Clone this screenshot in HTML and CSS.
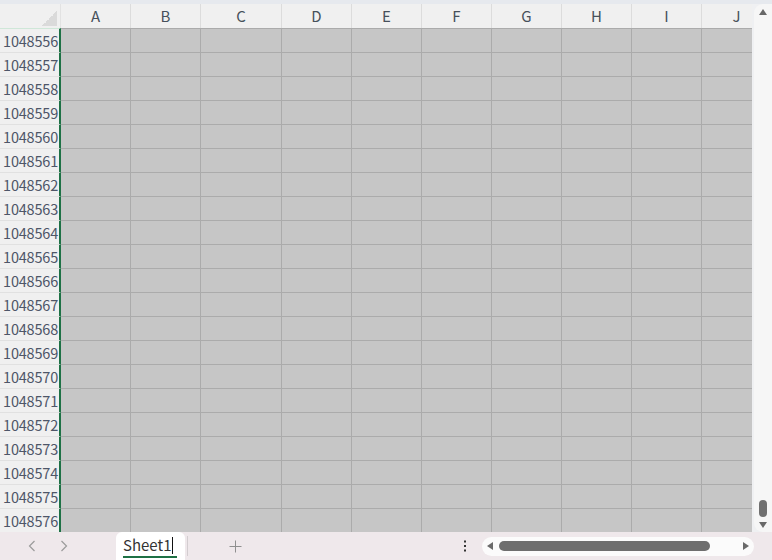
FILE: index.html
```html
<!DOCTYPE html>
<html lang="ja">
<head>
<meta charset="utf-8">
<title>Sheet1</title>
<link rel="stylesheet" href="styles.css">
</head>
<body>
<div class="app">
  <div class="topstrip"></div>
  <div class="main">
    <div class="sheet">
      <table class="grid">
        <colgroup>
          <col class="c-rh"><col class="c-std"><col class="c-std"><col class="c-wide"><col class="c-std"><col class="c-std"><col class="c-std"><col class="c-std"><col class="c-std"><col class="c-std"><col class="c-std">
        </colgroup>
        <thead>
          <tr><th class="corner"></th><th>A</th><th>B</th><th>C</th><th>D</th><th>E</th><th>F</th><th>G</th><th>H</th><th>I</th><th>J</th></tr>
        </thead>
        <tbody>
          <tr class="first"><th>1048556</th><td></td><td></td><td></td><td></td><td></td><td></td><td></td><td></td><td></td><td></td></tr>
          <tr><th>1048557</th><td></td><td></td><td></td><td></td><td></td><td></td><td></td><td></td><td></td><td></td></tr>
          <tr><th>1048558</th><td></td><td></td><td></td><td></td><td></td><td></td><td></td><td></td><td></td><td></td></tr>
          <tr><th>1048559</th><td></td><td></td><td></td><td></td><td></td><td></td><td></td><td></td><td></td><td></td></tr>
          <tr><th>1048560</th><td></td><td></td><td></td><td></td><td></td><td></td><td></td><td></td><td></td><td></td></tr>
          <tr><th>1048561</th><td></td><td></td><td></td><td></td><td></td><td></td><td></td><td></td><td></td><td></td></tr>
          <tr><th>1048562</th><td></td><td></td><td></td><td></td><td></td><td></td><td></td><td></td><td></td><td></td></tr>
          <tr><th>1048563</th><td></td><td></td><td></td><td></td><td></td><td></td><td></td><td></td><td></td><td></td></tr>
          <tr><th>1048564</th><td></td><td></td><td></td><td></td><td></td><td></td><td></td><td></td><td></td><td></td></tr>
          <tr><th>1048565</th><td></td><td></td><td></td><td></td><td></td><td></td><td></td><td></td><td></td><td></td></tr>
          <tr><th>1048566</th><td></td><td></td><td></td><td></td><td></td><td></td><td></td><td></td><td></td><td></td></tr>
          <tr><th>1048567</th><td></td><td></td><td></td><td></td><td></td><td></td><td></td><td></td><td></td><td></td></tr>
          <tr><th>1048568</th><td></td><td></td><td></td><td></td><td></td><td></td><td></td><td></td><td></td><td></td></tr>
          <tr><th>1048569</th><td></td><td></td><td></td><td></td><td></td><td></td><td></td><td></td><td></td><td></td></tr>
          <tr><th>1048570</th><td></td><td></td><td></td><td></td><td></td><td></td><td></td><td></td><td></td><td></td></tr>
          <tr><th>1048571</th><td></td><td></td><td></td><td></td><td></td><td></td><td></td><td></td><td></td><td></td></tr>
          <tr><th>1048572</th><td></td><td></td><td></td><td></td><td></td><td></td><td></td><td></td><td></td><td></td></tr>
          <tr><th>1048573</th><td></td><td></td><td></td><td></td><td></td><td></td><td></td><td></td><td></td><td></td></tr>
          <tr><th>1048574</th><td></td><td></td><td></td><td></td><td></td><td></td><td></td><td></td><td></td><td></td></tr>
          <tr><th>1048575</th><td></td><td></td><td></td><td></td><td></td><td></td><td></td><td></td><td></td><td></td></tr>
          <tr><th>1048576</th><td></td><td></td><td></td><td></td><td></td><td></td><td></td><td></td><td></td><td></td></tr>
        </tbody>
      </table>
    </div>
    <div class="vscroll">
      <span class="tri tri-up"></span>
      <span class="vthumb"></span>
      <span class="tri tri-down"></span>
    </div>
  </div>
  <div class="bottombar">
    <button class="nav prev" aria-label="前のシート">
      <svg width="8" height="12" viewBox="0 0 8 12"><path d="M6.5 1 L1.5 6 L6.5 11" fill="none" stroke="#9b9b9b" stroke-width="1.2"/></svg>
    </button>
    <button class="nav next" aria-label="次のシート">
      <svg width="8" height="12" viewBox="0 0 8 12"><path d="M1.5 1 L6.5 6 L1.5 11" fill="none" stroke="#9b9b9b" stroke-width="1.2"/></svg>
    </button>
    <div class="tab"><span class="tab-label">Sheet1<span class="caret"></span></span></div>
    <span class="sep"></span>
    <button class="plus" aria-label="シートの追加">
      <svg width="13" height="13" viewBox="0 0 13 13"><path d="M6.5 0.5 V12.5 M0.5 6.5 H12.5" fill="none" stroke="#8f8f8f" stroke-width="1"/></svg>
    </button>
    <button class="kebab" aria-label="その他">
      <svg width="4" height="12" viewBox="0 0 4 12"><rect x="1" y="0.5" width="2" height="2" fill="#333"/><rect x="1" y="5" width="2" height="2" fill="#333"/><rect x="1" y="9.5" width="2" height="2" fill="#333"/></svg>
    </button>
    <div class="hscroll">
      <span class="tri tri-left"></span>
      <span class="hthumb"></span>
      <span class="tri tri-right"></span>
    </div>
  </div>
</div>
</body>
</html>
```
FILE: styles.css
```css
* { box-sizing: border-box; }
html, body { margin: 0; padding: 0; }
body {
  width: 772px;
  height: 560px;
  overflow: hidden;
  font-family: "Noto Sans CJK JP", "Noto Sans", sans-serif;
  background: #eef0f2;
}
.app { display: flex; flex-direction: column; height: 560px; }
.topstrip { flex: none; height: 4px; background: #e6e9ee; }
.main { flex: none; display: flex; height: 528px; background: #eff0f2; }
.sheet { flex: none; width: 752px; overflow: hidden; }

.grid {
  border-collapse: separate;
  border-spacing: 0;
  table-layout: fixed;
  width: 772px;
}
.c-rh { width: 61px; }
.c-std { width: 70px; }
.c-wide { width: 81px; }
.grid tr { height: 24px; }

.grid thead th {
  height: 24px;
  padding: 0;
  background: #f0f0f0;
  border-right: 1px solid #dcdcdc;
  font-weight: normal;
  font-size: 15px;
  line-height: 22px;
  color: #47505b;
  text-align: center;
}
.grid thead th.corner {
  border-right: 1px solid #e2e2e2;
  background:
    linear-gradient(to bottom right, transparent 50%, #dadada 50%) no-repeat right 3px bottom 2px / 15px 15px,
    #f0f0f0;
}

.grid tbody th {
  height: 24px;
  padding: 0 1px 0 0;
  background: #f0f0f0;
  border-top: 1px solid #e1e1e1;
  border-right: 2px solid #1e7145;
  font-weight: normal;
  font-size: 14.5px;
  line-height: 22px;
  color: #4e5668;
  text-align: right;
  letter-spacing: -0.2px;
}
.grid tbody tr.first th { border-top-color: #cfe7d8; }
.grid td {
  height: 24px;
  padding: 0;
  background: #c6c6c6;
  border-top: 1px solid #ababab;
  border-right: 1px solid #ababab;
}

.vscroll {
  flex: none;
  width: 18px;
  margin-left: 2px;
  background: #f6f6f6;
  border-radius: 9px 0 0 9px;
  display: flex;
  flex-direction: column;
  align-items: center;
  padding: 5px 0 4px 0;
}
.tri { display: block; width: 0; height: 0; flex: none; }
.tri-up { border-left: 4.5px solid transparent; border-right: 4.5px solid transparent; border-bottom: 6px solid #686868; }
.tri-down { border-left: 4.5px solid transparent; border-right: 4.5px solid transparent; border-top: 6px solid #686868; }
.tri-left { border-top: 4.5px solid transparent; border-bottom: 4.5px solid transparent; border-right: 6px solid #6a6a6a; }
.tri-right { border-top: 4.5px solid transparent; border-bottom: 4.5px solid transparent; border-left: 6px solid #6a6a6a; }
.vthumb {
  margin-top: auto;
  margin-bottom: 5px;
  width: 8px;
  height: 17px;
  border-radius: 4px;
  background: #707070;
}

.bottombar {
  flex: none;
  height: 28px;
  background: #efe8eb;
  display: flex;
  align-items: center;
}
.bottombar button {
  border: none;
  background: transparent;
  padding: 0;
  margin: 0;
  display: flex;
  align-items: center;
  justify-content: center;
  height: 28px;
}
.nav { width: 24px; }
.nav.prev { margin-left: 20px; }
.nav.next { margin-left: 8px; }
.tab {
  align-self: stretch;
  margin-left: 40px;
  width: 69px;
  background: #ffffff;
  border-radius: 6px 6px 0 0;
  display: flex;
  align-items: center;
  padding: 1px 0 0 7px;
}
.tab-label {
  display: inline-flex;
  align-items: center;
  font-size: 15px;
  line-height: 20px;
  color: #333333;
  border-bottom: 2px solid #1e7145;
  padding: 0 4px 1px 0;
}
.caret {
  display: inline-block;
  width: 1px;
  height: 17px;
  background: #111;
  margin-left: 1px;
}
.sep {
  flex: none;
  width: 1px;
  height: 20px;
  margin-left: 2px;
  background: #d3cdd0;
}
.bottombar .plus { width: 20px; margin-left: 37px; }
.bottombar .kebab { width: 10px; margin-left: 215px; }
.hscroll {
  margin-left: 12px;
  width: 272px;
  height: 19px;
  border-radius: 10px;
  background: #fbfbfb;
  display: flex;
  align-items: center;
  padding: 0 5px;
}
.hthumb {
  margin-left: 6px;
  width: 211px;
  height: 10px;
  border-radius: 5px;
  background: #6e6e6e;
}
.tri-right { margin-left: auto; }
```
